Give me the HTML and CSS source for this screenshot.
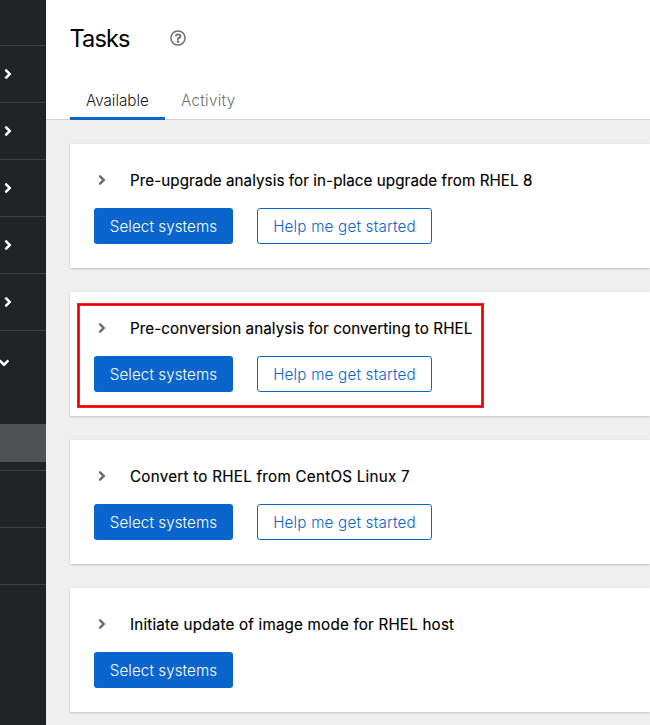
FILE: index.html
```
<!DOCTYPE html>
<html lang="en">
<head>
<meta charset="utf-8">
<title>Tasks</title>
<link rel="stylesheet" href="styles.css">
</head>
<body>
<svg class="defs" aria-hidden="true">
  <symbol id="angle" viewBox="0 0 256 512"><path d="M224.3 273l-136 136c-9.4 9.4-24.6 9.4-33.9 0l-22.6-22.6c-9.4-9.4-9.4-24.6 0-33.9l96.4-96.4-96.4-96.4c-9.4-9.4-9.4-24.6 0-33.9L54.3 103c9.4-9.4 24.6-9.4 33.9 0l136 136c9.5 9.4 9.5 24.6.1 34z"/></symbol>
</svg>
<div class="page">
  <nav class="sidebar">
    <div class="nav-item nav-first"></div>
    <div class="nav-item"><svg class="angle"><use href="#angle"/></svg></div>
    <div class="nav-item"><svg class="angle"><use href="#angle"/></svg></div>
    <div class="nav-item"><svg class="angle"><use href="#angle"/></svg></div>
    <div class="nav-item"><svg class="angle"><use href="#angle"/></svg></div>
    <div class="nav-item"><svg class="angle"><use href="#angle"/></svg></div>
    <div class="nav-item nav-open">
      <div class="nav-head"><svg class="angle angle-down"><use href="#angle"/></svg></div>
      <div class="nav-current"></div>
    </div>
    <div class="nav-item"></div>
    <div class="nav-item"></div>
  </nav>
  <main class="main">
    <header class="header">
      <div class="title-row">
        <h1>Tasks</h1>
        <svg class="help" viewBox="0 0 512 512"><path d="M256 8C119.043 8 8 119.083 8 256c0 136.997 111.043 248 248 248s248-111.003 248-248C504 119.083 392.957 8 256 8zm0 448c-110.532 0-200-89.431-200-200 0-110.495 89.472-200 200-200 110.491 0 200 89.471 200 200 0 110.53-89.431 200-200 200zm107.244-255.2c0 67.052-72.421 68.084-72.421 92.863V300c0 6.627-5.373 12-12 12h-45.647c-6.627 0-12-5.373-12-12v-8.659c0-35.745 27.1-50.034 47.579-61.516 17.561-9.845 28.324-16.541 28.324-29.579 0-17.246-21.999-28.693-39.784-28.693-23.189 0-33.894 10.977-48.942 29.969-4.057 5.12-11.46 6.071-16.666 2.124l-27.824-21.098c-5.107-3.872-6.251-11.066-2.644-16.363C184.846 131.491 214.94 112 261.794 112c49.071 0 101.45 38.304 101.45 88.8zM298 368c0 23.159-18.841 42-42 42s-42-18.841-42-42 18.841-42 42-42 42 18.841 42 42z"/></svg>
      </div>
      <div class="tabs">
        <div class="tab tab-active">Available</div>
        <div class="tab tab-activity">Activity</div>
      </div>
    </header>
    <section class="cards">
      <article class="card upgrade">
        <div class="card-head"><svg class="angle"><use href="#angle"/></svg><h2>Pre-upgrade analysis for in-place upgrade from RHEL 8</h2></div>
        <div class="actions"><button class="btn primary">Select systems</button><button class="btn secondary">Help me get started</button></div>
      </article>
      <article class="card conversion">
        <div class="card-head"><svg class="angle"><use href="#angle"/></svg><h2>Pre-conversion analysis for converting to RHEL</h2></div>
        <div class="actions"><button class="btn primary">Select systems</button><button class="btn secondary">Help me get started</button></div>
        <div class="highlight"></div>
      </article>
      <article class="card convert">
        <div class="card-head"><svg class="angle"><use href="#angle"/></svg><h2>Convert to RHEL from CentOS Linux 7</h2></div>
        <div class="actions"><button class="btn primary">Select systems</button><button class="btn secondary">Help me get started</button></div>
      </article>
      <article class="card image-mode">
        <div class="card-head"><svg class="angle"><use href="#angle"/></svg><h2>Initiate update of image mode for RHEL host</h2></div>
        <div class="actions"><button class="btn primary">Select systems</button></div>
      </article>
    </section>
  </main>
</div>
</body>
</html>
```
FILE: styles.css
```
* { box-sizing: border-box; }
body {
  margin: 0;
  font-family: Inter, "Liberation Sans", sans-serif;
  font-size: 15.2px;
  color: #151515;
}
.defs { position: absolute; width: 0; height: 0; }
.page { display: flex; height: 725px; overflow: hidden; }
.angle { display: block; flex: none; width: 8px; height: 16px; fill: currentColor; }

.sidebar { flex: none; width: 46px; background: #212427; color: #fff; }
.nav-item {
  display: flex;
  align-items: center;
  height: 57px;
  padding-left: 4px;
  border-bottom: 1px solid #3c3f42;
}
.nav-first { height: 46px; }
.nav-open { display: block; height: 140px; padding: 0; }
.nav-head { display: flex; align-items: center; height: 63px; }
.angle-down { transform: rotate(90deg); }
.nav-current { height: 38px; margin-top: 30px; background: #4f5255; }

.main { flex: 1; min-width: 0; background: #efefef; }
.header { height: 120px; background: #fff; border-bottom: 1px solid #d2d2d2; }
.title-row { display: flex; align-items: center; height: 82px; padding: 0 0 6px 24px; }
h1 {
  width: 100px;
  margin: 0;
  padding-top: 1px;
  font-size: 23.6px;
  font-weight: 400;
  letter-spacing: -0.9px;
  text-indent: -0.5px;
  color: #000;
}
.help { width: 16px; height: 16px; fill: #6a6e73; }
.tabs { display: flex; padding-left: 24px; font-weight: 300; }
.tab { height: 38px; padding: 0 16px; line-height: 38px; color: #6a6e73; white-space: nowrap; }
.tab-active { width: 95px; border-bottom: 3px solid #0a65cc; color: #151515; }
.tab-activity { letter-spacing: 0.3px; }

.cards { display: flex; flex-direction: column; gap: 24px; padding: 24px 0 0 24px; }
.card {
  position: relative;
  height: 124px;
  padding: 24px 0 0 24px;
  background: #fff;
  box-shadow: 0 1px 2px rgba(3, 3, 3, .16), 0 0 2px rgba(3, 3, 3, .08);
}
.card-head { display: flex; align-items: center; height: 24px; padding-left: 4px; color: #6a6e73; }
h2 {
  margin: 0 0 0 24px;
  font-size: 15.2px;
  font-weight: 400;
  white-space: nowrap;
  color: #000;
  -webkit-text-stroke: 0.15px #000;
}
.upgrade h2 { letter-spacing: 0.06px; }
.conversion h2 { letter-spacing: 0.08px; }
.convert h2 { letter-spacing: 0.25px; }
.image-mode h2 { letter-spacing: 0.19px; }
.actions { display: flex; gap: 24px; margin-top: 16px; }
.btn {
  height: 36px;
  padding: 0;
  border: 0;
  border-radius: 3px;
  font: 300 15.2px Inter, "Liberation Sans", sans-serif;
  white-space: nowrap;
}
.primary { width: 139px; background: #0a65cc; color: #fff; letter-spacing: 0.06px; }
.secondary { width: 175px; border: 1px solid #0a65cc; background: #fff; color: #0a65cc; letter-spacing: 0.2px; }
.highlight {
  position: absolute;
  top: 11px;
  left: 7px;
  width: 407px;
  height: 105px;
  border: 3px double #f82424;
  background:
    linear-gradient(#e60000, #e60000) 0 0 / 100% 3px no-repeat border-box,
    linear-gradient(#e60000, #e60000) 0 100% / 100% 3px no-repeat border-box,
    linear-gradient(#e60000, #e60000) 0 0 / 3px 100% no-repeat border-box,
    linear-gradient(#e60000, #e60000) 100% 0 / 3px 100% no-repeat border-box;
}
```
